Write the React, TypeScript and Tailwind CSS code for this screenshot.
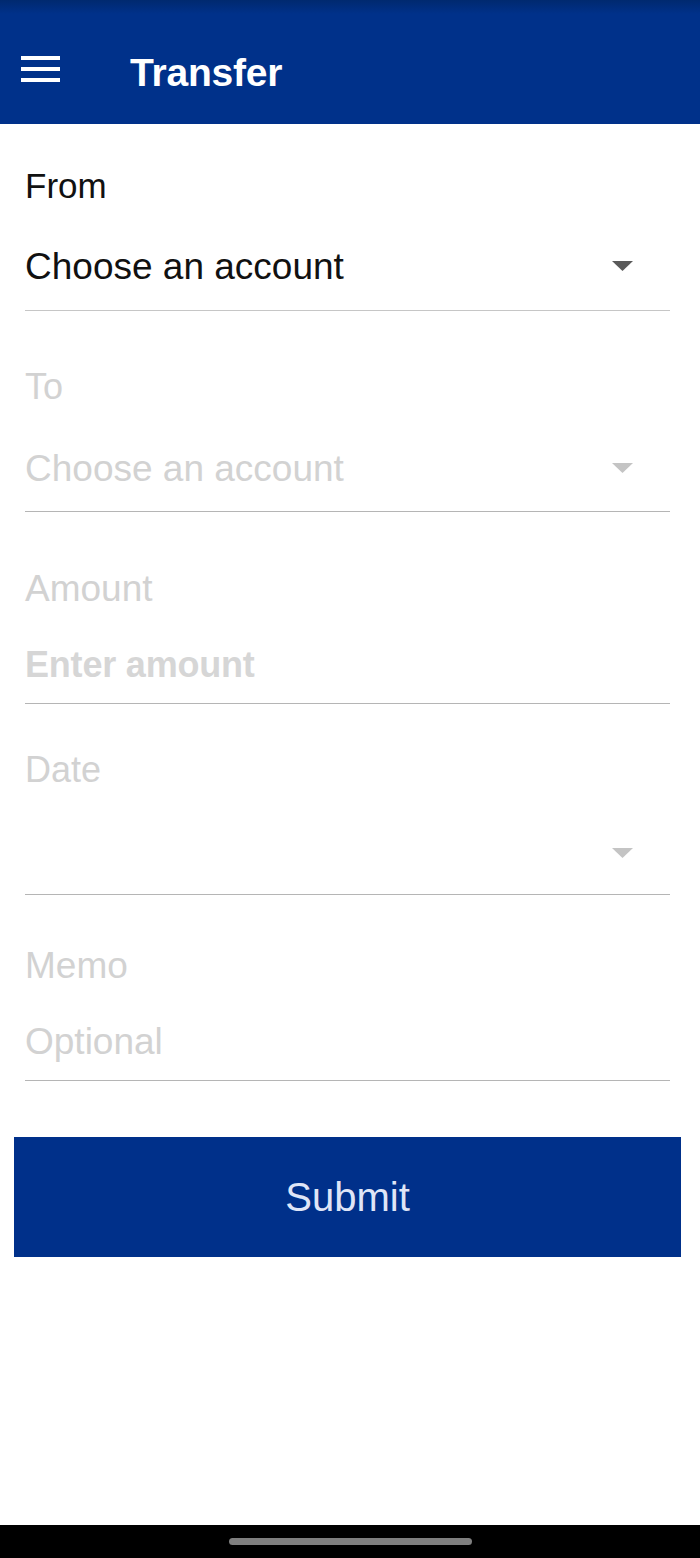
import React from "react";

const font = { fontFamily: '"Liberation Sans", Arial, sans-serif' };

function Arrow({ dark }: { dark?: boolean }) {
  return (
    <svg width="21" height="10" viewBox="0 0 21 10" className="mr-[37px] shrink-0">
      <polygon points="0,0 21,0 10.5,10" fill={dark ? "#5a5a5a" : "#c4c4c4"} />
    </svg>
  );
}

export default function App() {
  return (
    <div className="min-h-[1558px] w-[700px] flex flex-col bg-white" style={font}>
      <header className="h-[124px] shrink-0 bg-[linear-gradient(to_bottom,#00296f_0px,#00318a_14px,#00318a_100%)] flex items-center pt-[16px]">
        <div className="ml-[21px] w-[39px] flex flex-col gap-[7px] mt-[-2px]">
          <span className="block h-[4px] bg-white" />
          <span className="block h-[4px] bg-white" />
          <span className="block h-[4px] bg-white" />
        </div>
        <h1 className="ml-[70px] text-white text-[39px] font-bold leading-none mt-[4px] tracking-[-0.2px]">Transfer</h1>
      </header>

      <main className="pl-[25px] pr-[30px]">
        {/* From */}
        <div className="pt-[42px] pb-[22px] border-b border-[#c6c6c6]">
          <div className="h-[40px] leading-[40px] text-[35px] text-[#111]">From</div>
          <div className="mt-[38px] h-[44px] flex items-center justify-between">
            <span className="text-[37px] leading-none text-[#111]">Choose an account</span>
            <Arrow dark />
          </div>
        </div>

        {/* To */}
        <div className="pt-[56px] pb-[21px] border-b border-[#b5b5b5]">
          <div className="h-[40px] leading-[40px] text-[36px] text-[#d2d2d2]">To</div>
          <div className="mt-[39px] h-[44px] flex items-center justify-between">
            <span className="text-[37px] leading-none text-[#d2d2d2]">Choose an account</span>
            <Arrow />
          </div>
        </div>

        {/* Amount */}
        <div className="pt-[57px] pb-[16px] border-b border-[#b5b5b5]">
          <div className="h-[40px] leading-[40px] text-[37px] text-[#d2d2d2]">Amount</div>
          <div className="mt-[34px] h-[44px] flex items-center">
            <span className="text-[36px] font-bold leading-none text-[#d6d6d6] tracking-[-0.2px]">Enter amount</span>
          </div>
        </div>

        {/* Date */}
        <div className="pt-[46px] pb-[19px] border-b border-[#b5b5b5]">
          <div className="h-[40px] leading-[40px] text-[36px] text-[#d2d2d2]">Date</div>
          <div className="mt-[41px] h-[44px] flex items-center justify-end">
            <Arrow />
          </div>
        </div>

        {/* Memo */}
        <div className="pt-[51px] pb-[17px] border-b border-[#b5b5b5]">
          <div className="h-[40px] leading-[40px] text-[37px] text-[#d2d2d2]">Memo</div>
          <div className="mt-[33px] h-[44px] flex items-center">
            <span className="text-[37px] leading-none text-[#d2d2d2]">Optional</span>
          </div>
        </div>
      </main>

      <div className="mt-[56px] ml-[14px] mr-[19px]">
        <button className="w-full h-[120px] bg-[#00308a] flex items-center justify-center">
          <span className="text-[40px] leading-none text-[#dfe5f7]">Submit</span>
        </button>
      </div>

      <div className="flex-1" />

      <div className="h-[33px] bg-black flex items-center justify-center shrink-0">
        <span className="block w-[243px] h-[7px] rounded-full bg-[#7f7f7f]" />
      </div>
    </div>
  );
}
